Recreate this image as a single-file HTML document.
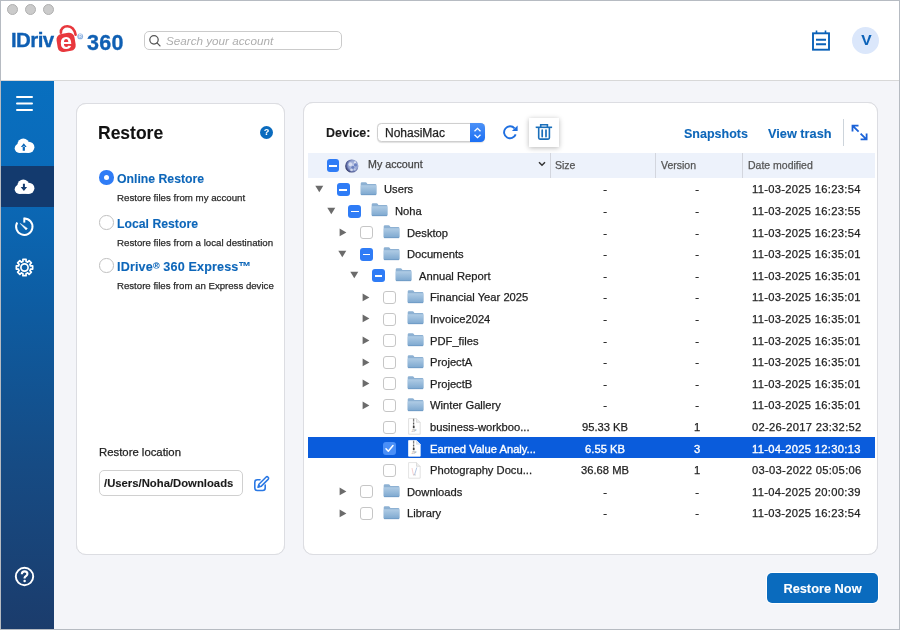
<!DOCTYPE html>
<html><head><meta charset="utf-8">
<style>
*{box-sizing:border-box;margin:0;padding:0}
html,body{width:900px;height:630px;overflow:hidden;background:#f4f5f9;-webkit-font-smoothing:antialiased;font-family:"Liberation Sans",sans-serif}
.a{position:absolute}
#frame{position:absolute;left:0;top:0;width:900px;height:630px;border:1px solid #b6bbc2}
#hdr{left:1px;top:1px;width:898px;height:80px;background:#fff;border-bottom:1px solid #d8d8d8}
.tl{width:11px;height:11px;border-radius:50%;background:#cbcbcb;border:1px solid #b0b0b0;top:2.8px}
#side{left:1px;top:81px;width:53px;height:548px;background:linear-gradient(#086fbf 0%,#0a6ab9 18%,#0d5da3 40%,#164b84 70%,#1b3c6c 100%)}
.card{background:#fff;border:1px solid #dcdde2;border-radius:10px;box-shadow:0 0 0.6px rgba(0,0,0,0.12)}
.t{white-space:nowrap;position:absolute;line-height:1;will-change:transform;-webkit-text-stroke:0.25px currentColor}
.blue{color:#0d66b9}
.t[style*="bold"]{-webkit-text-stroke:0.1px currentColor}
</style></head><body>
<!-- header -->
<div id="hdr" class="a">
  <div class="a tl" style="left:6px"></div>
  <div class="a tl" style="left:24px"></div>
  <div class="a tl" style="left:42px"></div>
</div>
<div class="t" style="left:11px;top:30px;font-size:20.5px;font-weight:bold;color:#0f5fb3;letter-spacing:-0.6px;-webkit-text-stroke:0.3px #0f5fb3">IDriv</div>
<svg class="a" style="left:54px;top:23px" width="26" height="32" viewBox="0 0 26 32">
  <path d="M6.9 9.6 C6.6 5.8 9.5 3.2 13.5 3.3 C17.8 3.5 20.6 6.6 21.6 11.8" fill="none" stroke="#e8383d" stroke-width="2.6" stroke-linecap="round"/>
  <g transform="rotate(-9 12.1 19.4)">
    <rect x="3" y="10.3" width="18.2" height="18.2" rx="5.5" fill="#e8383d"/>
  </g>
  <text x="12" y="25.9" text-anchor="middle" font-family="Liberation Sans" font-weight="bold" font-size="21.5" fill="#fff">e</text>
</svg>
<svg class="a" style="left:77px;top:33px" width="7" height="7" viewBox="0 0 7 7"><circle cx="3.2" cy="3.4" r="2.9" fill="#8fb3e0"/><text x="3.2" y="5.2" text-anchor="middle" font-size="4.8" font-weight="bold" font-family="Liberation Sans" fill="#e8f0fb">R</text></svg>
<div class="t" style="left:86.5px;top:32.5px;font-size:21.5px;font-weight:bold;color:#0f5fb3;letter-spacing:0.3px;-webkit-text-stroke:0.3px #0f5fb3">360</div>
<!-- search -->
<div class="a" style="left:144px;top:30.8px;width:198px;height:19.4px;border:1.2px solid #cbcbcb;border-radius:5px;background:#fff"></div>
<svg class="a" style="left:148px;top:34px" width="14" height="14" viewBox="0 0 14 14"><circle cx="6" cy="5.8" r="4.2" fill="none" stroke="#555" stroke-width="1.25"/><path d="M9 8.9 L12 11.9" stroke="#555" stroke-width="1.3" stroke-linecap="round"/></svg>
<div class="t" style="left:165.5px;top:35px;font-size:11.7px;font-style:italic;color:#aeaeae;-webkit-text-stroke:0">Search your account</div>
<!-- notes icon -->
<svg class="a" style="left:810px;top:29px" width="22" height="23" viewBox="0 0 22 23">
  <rect x="3" y="4.3" width="16" height="16.4" fill="none" stroke="#0b62b8" stroke-width="1.9"/>
  <path d="M6.5 1.5 V4.5 M15.5 1.5 V4.5" stroke="#0b62b8" stroke-width="1.6"/>
  <path d="M6 10.8 H16 M6 15.2 H16" stroke="#0b62b8" stroke-width="1.9"/>
</svg>
<div class="a" style="left:852px;top:27px;width:27px;height:27px;border-radius:50%;background:#dbe7fb"></div>
<div class="t" style="left:852.5px;top:31.5px;width:27px;text-align:center;font-size:15.5px;font-weight:bold;color:#0b62b8">V</div>

<!-- sidebar -->
<div id="side" class="a"></div>
<div class="a" style="left:1px;top:166px;width:53px;height:41px;background:#133a6e"></div>
<div class="a" style="left:16px;top:96px;width:17px;height:2px;background:#fff;border-radius:1px;box-shadow:0 6.5px 0 #fff,0 13px 0 #fff"></div>
<!-- cloud up -->
<svg class="a" style="left:13px;top:136px" width="23" height="19" viewBox="0 0 23 19"><circle cx="6.3" cy="12.3" r="4.6" fill="#fff"/><circle cx="10.3" cy="8.3" r="5.9" fill="#fff"/><circle cx="15.8" cy="11.3" r="5.6" fill="#fff"/><rect x="6.3" y="10" width="9.5" height="6.9" fill="#fff"/><path d="M7.9 11.1 H13.7 L10.8 7.3 Z M9.7 10.5 H11.9 V14.7 H9.7 Z" fill="#0b68b9"/></svg>
<!-- cloud down -->
<svg class="a" style="left:13px;top:177px" width="23" height="19" viewBox="0 0 23 19"><circle cx="6.3" cy="12.3" r="4.6" fill="#fff"/><circle cx="10.3" cy="8.3" r="5.9" fill="#fff"/><circle cx="15.8" cy="11.3" r="5.6" fill="#fff"/><rect x="6.3" y="10" width="9.5" height="6.9" fill="#fff"/><path d="M7.7 10.1 H14.1 L10.9 14.1 Z M9.9 6.8 H11.9 V10.5 H9.9 Z" fill="#133a6e"/></svg>
<!-- timer -->
<svg class="a" style="left:13px;top:215px" width="23" height="23" viewBox="0 0 23 23">
  <path d="M11.3 3.5 A8.2 8.2 0 1 1 4.2 7.6" fill="none" stroke="#fff" stroke-width="2"/>
  <path d="M11.3 2.6 V7.6" stroke="#fff" stroke-width="2"/>
  <path d="M7.2 8.4 L14.4 13.4 L13 14.9 Z" fill="#fff" stroke="#fff" stroke-width="0.5" stroke-linejoin="round"/>
</svg>
<!-- gear -->
<svg class="a" style="left:14px;top:257px" width="21" height="21" viewBox="-10.5 -10.5 21 21">
  <path d="M5.73 -2.37 L5.99 -1.60 L8.15 -1.58 L8.15 1.58 L5.99 1.60 L5.73 2.37 L5.37 3.10 L6.88 4.64 L4.64 6.88 L3.10 5.37 L2.37 5.73 L1.60 5.99 L1.58 8.15 L-1.58 8.15 L-1.60 5.99 L-2.37 5.73 L-3.10 5.37 L-4.64 6.88 L-6.88 4.64 L-5.37 3.10 L-5.73 2.37 L-5.99 1.60 L-8.15 1.58 L-8.15 -1.58 L-5.99 -1.60 L-5.73 -2.37 L-5.37 -3.10 L-6.88 -4.64 L-4.64 -6.88 L-3.10 -5.37 L-2.37 -5.73 L-1.60 -5.99 L-1.58 -8.15 L1.58 -8.15 L1.60 -5.99 L2.37 -5.73 L3.10 -5.37 L4.64 -6.88 L6.88 -4.64 L5.37 -3.10 Z" stroke-linejoin="round" fill="none" stroke="#fff" stroke-width="1.7"/>
  <circle cx="0" cy="0" r="3.6" fill="none" stroke="#fff" stroke-width="1.7"/>
</svg>
<!-- help -->
<svg class="a" style="left:14px;top:565.5px" width="21" height="21" viewBox="0 0 21 21">
  <circle cx="10.5" cy="10.5" r="8.7" fill="none" stroke="#fff" stroke-width="1.9"/>
  <path d="M7.8 8.3 C7.8 6.4 9.1 5.4 10.6 5.4 C12.2 5.4 13.4 6.4 13.4 8 C13.4 9.9 11 10.2 10.6 11.8 V12.5" fill="none" stroke="#fff" stroke-width="2.1"/>
  <circle cx="10.6" cy="15" r="1.25" fill="#fff"/>
</svg>

<!-- left card -->
<div class="a card" style="left:76px;top:102.5px;width:208.5px;height:452.5px"></div>
<div class="t" style="left:98.2px;top:124.5px;font-size:17.5px;font-weight:bold;color:#111">Restore</div>
<div class="a" style="left:260px;top:126px;width:13px;height:13px;border-radius:50%;background:#0a6bbe"></div>
<div class="t" style="left:260px;top:128px;width:13px;text-align:center;font-size:8.6px;font-weight:bold;color:#fff">?</div>
<!-- radios -->
<div class="a" style="left:99px;top:170px;width:14.5px;height:14.5px;border-radius:50%;background:#2f7cf6"></div>
<div class="a" style="left:103.5px;top:174.5px;width:5.5px;height:5.5px;border-radius:50%;background:#fff"></div>
<div class="t blue" style="left:116.5px;top:172.6px;font-size:12.25px;font-weight:bold">Online Restore</div>
<div class="t" style="left:116.5px;top:193px;font-size:9.7px;color:#2b2b2b">Restore files from my account</div>
<div class="a" style="left:99px;top:215px;width:14.5px;height:14.5px;border-radius:50%;background:#fff;border:1.3px solid #c0c0c0"></div>
<div class="t blue" style="left:116.5px;top:217.6px;font-size:12.25px;font-weight:bold">Local Restore</div>
<div class="t" style="left:116.5px;top:238px;font-size:9.7px;color:#2b2b2b">Restore files from a local destination</div>
<div class="a" style="left:99px;top:258px;width:14.5px;height:14.5px;border-radius:50%;background:#fff;border:1.3px solid #c0c0c0"></div>
<div class="t blue" style="left:116.5px;top:261.1px;font-size:12.6px;font-weight:bold;letter-spacing:0.15px">IDrive<span style="font-size:9px;position:relative;top:-2.5px">®</span> 360 Express™</div>
<div class="t" style="left:116.5px;top:281px;font-size:9.65px;color:#2b2b2b">Restore files from an Express device</div>
<!-- restore location -->
<div class="t" style="left:99px;top:446.5px;font-size:11.35px;color:#222">Restore location</div>
<div class="a" style="left:99px;top:470px;width:144px;height:26px;border:1px solid #d0d0d0;border-radius:5px;background:#fff"></div>
<div class="t" style="left:104px;top:478px;font-size:11.3px;font-weight:bold;color:#1a1a1a">/Users/Noha/Downloads</div>
<svg class="a" style="left:252px;top:475px" width="18" height="18" viewBox="0 0 18 18">
  <path d="M8 4.7 H5.3 Q2.8 4.7 2.8 7.2 V13 Q2.8 15.5 5.3 15.5 H10.7 Q13.2 15.5 13.2 13 V10" fill="none" stroke="#2a78e4" stroke-width="1.6" stroke-linecap="round"/>
  <path d="M6 12.3 L6.9 9.2 L13.9 2.2 Q15 1.1 16.1 2.2 Q17.2 3.3 16.1 4.4 L9.1 11.4 Z" fill="none" stroke="#2a78e4" stroke-width="1.5" stroke-linejoin="round"/>
  <path d="M5.8 12.5 L6.9 9.2 L9.1 11.4 Z" fill="#2a78e4"/>
</svg>
<!-- right card -->
<div class="a card" style="left:303px;top:102px;width:575px;height:453px"></div>
<svg width="0" height="0" style="position:absolute"><defs>
<linearGradient id="fg" x1="0" y1="0" x2="0" y2="1"><stop offset="0" stop-color="#b0cce5"/><stop offset="1" stop-color="#7ca7cf"/></linearGradient>
<g id="fold"><path d="M0.7 1.5 Q0.7 0.2 2 0.2 H5.6 Q6.4 0.2 6.8 0.9 L7.4 2.1 H15.2 Q16.4 2.1 16.4 3.3 V12 H0.7 Z" fill="#8db1d3"/><rect x="0.7" y="3.2" width="15.7" height="9.9" rx="0.9" fill="url(#fg)"/><path d="M1.2 12.7 H15.9" stroke="#6a97c2" stroke-width="0.8"/></g>
</defs></svg>
<div class="a" style="left:308px;top:153px;width:567px;height:25px;background:#edf2fb"></div>
<div class="a" style="left:550px;top:153px;width:1px;height:25px;background:#d3d6de"></div>
<div class="a" style="left:655px;top:153px;width:1px;height:25px;background:#d3d6de"></div>
<div class="a" style="left:742px;top:153px;width:1px;height:25px;background:#d3d6de"></div>
<div class="a" style="left:326.75px;top:159.25px;width:12.5px;height:12.5px;border-radius:3px;background:#2f7cf6"></div><div class="a" style="left:329.25px;top:164.75px;width:7.5px;height:1.8px;background:#fff"></div>
<svg class="a" style="left:344px;top:158.5px" width="15" height="15" viewBox="0 0 15 15"><defs><radialGradient id="gl" cx="0.6" cy="0.45" r="0.62"><stop offset="0" stop-color="#c9d2ec"/><stop offset="0.6" stop-color="#8f9fcf"/><stop offset="0.85" stop-color="#4a5590"/><stop offset="1" stop-color="#23284f"/></radialGradient></defs><circle cx="7.8" cy="7" r="6.6" fill="url(#gl)"/><ellipse cx="6.3" cy="5.2" rx="1.8" ry="2" fill="#e9eefa" opacity="0.75"/><circle cx="8.8" cy="8.2" r="1.5" fill="#4f68b0" opacity="0.7"/><circle cx="11.4" cy="6" r="1.6" fill="#4a66b4" opacity="0.65"/><circle cx="11" cy="3.2" r="0.9" fill="#fff" opacity="0.8"/><circle cx="7.5" cy="11" r="1.3" fill="#eef2fb" opacity="0.7"/><circle cx="10.8" cy="10.4" r="1" fill="#dfe6f6" opacity="0.6"/></svg>
<div class="t" style="left:368px;top:159px;font-size:10.7px;color:#444">My account</div>
<svg class="a" style="left:538px;top:161px" width="8" height="6" viewBox="0 0 8 6"><path d="M1 1.2 L4 4.2 L7 1.2" fill="none" stroke="#333" stroke-width="1.5"/></svg>
<div class="t" style="left:555px;top:159.5px;font-size:10.5px;color:#555">Size</div>
<div class="t" style="left:661px;top:159.5px;font-size:10.5px;color:#555">Version</div>
<div class="t" style="left:748px;top:159.5px;font-size:10.5px;color:#555">Date modified</div>
<svg class="a" style="left:315.0px;top:185.0px" width="9" height="8" viewBox="0 0 9 8"><path d="M0.3 0.8 H8.3 L4.3 7.2 Z" fill="#6b6b6b"/></svg>
<div class="a" style="left:336.5px;top:183.0px;width:13px;height:13px;border-radius:3px;background:#2f7cf6"></div><div class="a" style="left:339.45px;top:188.90px;width:7.5px;height:1.8px;background:#fff"></div>
<svg class="a" style="left:359.7px;top:181.8px" width="17" height="14" viewBox="0 0 17 14"><use href="#fold"/></svg>
<div class="t" style="left:383.6px;top:184.4px;font-size:11.2px;color:#1f1f1f;font-weight:normal">Users</div>
<div class="t" style="left:555px;width:100px;text-align:center;top:184.4px;font-size:11.2px;color:#1f1f1f;font-weight:normal">-</div>
<div class="t" style="left:656px;width:82px;text-align:center;top:184.4px;font-size:11.2px;color:#1f1f1f;font-weight:normal">-</div>
<div class="t" style="left:752px;top:184.4px;font-size:11.2px;letter-spacing:0.3px;color:#1f1f1f;font-weight:normal">11-03-2025 16:23:54</div>
<svg class="a" style="left:326.7px;top:206.6px" width="9" height="8" viewBox="0 0 9 8"><path d="M0.3 0.8 H8.3 L4.3 7.2 Z" fill="#6b6b6b"/></svg>
<div class="a" style="left:348.2px;top:204.6px;width:13px;height:13px;border-radius:3px;background:#2f7cf6"></div><div class="a" style="left:351.15px;top:210.50px;width:7.5px;height:1.8px;background:#fff"></div>
<svg class="a" style="left:371.4px;top:203.4px" width="17" height="14" viewBox="0 0 17 14"><use href="#fold"/></svg>
<div class="t" style="left:395.3px;top:206.0px;font-size:11.2px;color:#1f1f1f;font-weight:normal">Noha</div>
<div class="t" style="left:555px;width:100px;text-align:center;top:206.0px;font-size:11.2px;color:#1f1f1f;font-weight:normal">-</div>
<div class="t" style="left:656px;width:82px;text-align:center;top:206.0px;font-size:11.2px;color:#1f1f1f;font-weight:normal">-</div>
<div class="t" style="left:752px;top:206.0px;font-size:11.2px;letter-spacing:0.3px;color:#1f1f1f;font-weight:normal">11-03-2025 16:23:55</div>
<svg class="a" style="left:339.0px;top:227.9px" width="8" height="9" viewBox="0 0 8 9"><path d="M0.6 0.5 V8.3 L7.4 4.4 Z" fill="#6b6b6b"/></svg>
<div class="a" style="left:359.9px;top:226.2px;width:13px;height:13px;border-radius:3px;background:#fff;border:1.2px solid #c6c6c6"></div>
<svg class="a" style="left:383.1px;top:225.0px" width="17" height="14" viewBox="0 0 17 14"><use href="#fold"/></svg>
<div class="t" style="left:407.0px;top:227.6px;font-size:11.2px;color:#1f1f1f;font-weight:normal">Desktop</div>
<div class="t" style="left:555px;width:100px;text-align:center;top:227.6px;font-size:11.2px;color:#1f1f1f;font-weight:normal">-</div>
<div class="t" style="left:656px;width:82px;text-align:center;top:227.6px;font-size:11.2px;color:#1f1f1f;font-weight:normal">-</div>
<div class="t" style="left:752px;top:227.6px;font-size:11.2px;letter-spacing:0.3px;color:#1f1f1f;font-weight:normal">11-03-2025 16:23:54</div>
<svg class="a" style="left:338.4px;top:249.8px" width="9" height="8" viewBox="0 0 9 8"><path d="M0.3 0.8 H8.3 L4.3 7.2 Z" fill="#6b6b6b"/></svg>
<div class="a" style="left:359.9px;top:247.8px;width:13px;height:13px;border-radius:3px;background:#2f7cf6"></div><div class="a" style="left:362.85px;top:253.70px;width:7.5px;height:1.8px;background:#fff"></div>
<svg class="a" style="left:383.1px;top:246.6px" width="17" height="14" viewBox="0 0 17 14"><use href="#fold"/></svg>
<div class="t" style="left:407.0px;top:249.2px;font-size:11.2px;color:#1f1f1f;font-weight:normal">Documents</div>
<div class="t" style="left:555px;width:100px;text-align:center;top:249.2px;font-size:11.2px;color:#1f1f1f;font-weight:normal">-</div>
<div class="t" style="left:656px;width:82px;text-align:center;top:249.2px;font-size:11.2px;color:#1f1f1f;font-weight:normal">-</div>
<div class="t" style="left:752px;top:249.2px;font-size:11.2px;letter-spacing:0.3px;color:#1f1f1f;font-weight:normal">11-03-2025 16:35:01</div>
<svg class="a" style="left:350.1px;top:271.4px" width="9" height="8" viewBox="0 0 9 8"><path d="M0.3 0.8 H8.3 L4.3 7.2 Z" fill="#6b6b6b"/></svg>
<div class="a" style="left:371.6px;top:269.4px;width:13px;height:13px;border-radius:3px;background:#2f7cf6"></div><div class="a" style="left:374.55px;top:275.30px;width:7.5px;height:1.8px;background:#fff"></div>
<svg class="a" style="left:394.8px;top:268.2px" width="17" height="14" viewBox="0 0 17 14"><use href="#fold"/></svg>
<div class="t" style="left:418.7px;top:270.8px;font-size:11.2px;color:#1f1f1f;font-weight:normal">Annual Report</div>
<div class="t" style="left:555px;width:100px;text-align:center;top:270.8px;font-size:11.2px;color:#1f1f1f;font-weight:normal">-</div>
<div class="t" style="left:656px;width:82px;text-align:center;top:270.8px;font-size:11.2px;color:#1f1f1f;font-weight:normal">-</div>
<div class="t" style="left:752px;top:270.8px;font-size:11.2px;letter-spacing:0.3px;color:#1f1f1f;font-weight:normal">11-03-2025 16:35:01</div>
<svg class="a" style="left:362.4px;top:292.7px" width="8" height="9" viewBox="0 0 8 9"><path d="M0.6 0.5 V8.3 L7.4 4.4 Z" fill="#6b6b6b"/></svg>
<div class="a" style="left:383.3px;top:291.0px;width:13px;height:13px;border-radius:3px;background:#fff;border:1.2px solid #c6c6c6"></div>
<svg class="a" style="left:406.5px;top:289.8px" width="17" height="14" viewBox="0 0 17 14"><use href="#fold"/></svg>
<div class="t" style="left:430.4px;top:292.4px;font-size:11.2px;color:#1f1f1f;font-weight:normal">Financial Year 2025</div>
<div class="t" style="left:555px;width:100px;text-align:center;top:292.4px;font-size:11.2px;color:#1f1f1f;font-weight:normal">-</div>
<div class="t" style="left:656px;width:82px;text-align:center;top:292.4px;font-size:11.2px;color:#1f1f1f;font-weight:normal">-</div>
<div class="t" style="left:752px;top:292.4px;font-size:11.2px;letter-spacing:0.3px;color:#1f1f1f;font-weight:normal">11-03-2025 16:35:01</div>
<svg class="a" style="left:362.4px;top:314.3px" width="8" height="9" viewBox="0 0 8 9"><path d="M0.6 0.5 V8.3 L7.4 4.4 Z" fill="#6b6b6b"/></svg>
<div class="a" style="left:383.3px;top:312.6px;width:13px;height:13px;border-radius:3px;background:#fff;border:1.2px solid #c6c6c6"></div>
<svg class="a" style="left:406.5px;top:311.4px" width="17" height="14" viewBox="0 0 17 14"><use href="#fold"/></svg>
<div class="t" style="left:430.4px;top:314.0px;font-size:11.2px;color:#1f1f1f;font-weight:normal">Invoice2024</div>
<div class="t" style="left:555px;width:100px;text-align:center;top:314.0px;font-size:11.2px;color:#1f1f1f;font-weight:normal">-</div>
<div class="t" style="left:656px;width:82px;text-align:center;top:314.0px;font-size:11.2px;color:#1f1f1f;font-weight:normal">-</div>
<div class="t" style="left:752px;top:314.0px;font-size:11.2px;letter-spacing:0.3px;color:#1f1f1f;font-weight:normal">11-03-2025 16:35:01</div>
<svg class="a" style="left:362.4px;top:335.9px" width="8" height="9" viewBox="0 0 8 9"><path d="M0.6 0.5 V8.3 L7.4 4.4 Z" fill="#6b6b6b"/></svg>
<div class="a" style="left:383.3px;top:334.2px;width:13px;height:13px;border-radius:3px;background:#fff;border:1.2px solid #c6c6c6"></div>
<svg class="a" style="left:406.5px;top:333.0px" width="17" height="14" viewBox="0 0 17 14"><use href="#fold"/></svg>
<div class="t" style="left:430.4px;top:335.6px;font-size:11.2px;color:#1f1f1f;font-weight:normal">PDF_files</div>
<div class="t" style="left:555px;width:100px;text-align:center;top:335.6px;font-size:11.2px;color:#1f1f1f;font-weight:normal">-</div>
<div class="t" style="left:656px;width:82px;text-align:center;top:335.6px;font-size:11.2px;color:#1f1f1f;font-weight:normal">-</div>
<div class="t" style="left:752px;top:335.6px;font-size:11.2px;letter-spacing:0.3px;color:#1f1f1f;font-weight:normal">11-03-2025 16:35:01</div>
<svg class="a" style="left:362.4px;top:357.5px" width="8" height="9" viewBox="0 0 8 9"><path d="M0.6 0.5 V8.3 L7.4 4.4 Z" fill="#6b6b6b"/></svg>
<div class="a" style="left:383.3px;top:355.8px;width:13px;height:13px;border-radius:3px;background:#fff;border:1.2px solid #c6c6c6"></div>
<svg class="a" style="left:406.5px;top:354.6px" width="17" height="14" viewBox="0 0 17 14"><use href="#fold"/></svg>
<div class="t" style="left:430.4px;top:357.2px;font-size:11.2px;color:#1f1f1f;font-weight:normal">ProjectA</div>
<div class="t" style="left:555px;width:100px;text-align:center;top:357.2px;font-size:11.2px;color:#1f1f1f;font-weight:normal">-</div>
<div class="t" style="left:656px;width:82px;text-align:center;top:357.2px;font-size:11.2px;color:#1f1f1f;font-weight:normal">-</div>
<div class="t" style="left:752px;top:357.2px;font-size:11.2px;letter-spacing:0.3px;color:#1f1f1f;font-weight:normal">11-03-2025 16:35:01</div>
<svg class="a" style="left:362.4px;top:379.1px" width="8" height="9" viewBox="0 0 8 9"><path d="M0.6 0.5 V8.3 L7.4 4.4 Z" fill="#6b6b6b"/></svg>
<div class="a" style="left:383.3px;top:377.4px;width:13px;height:13px;border-radius:3px;background:#fff;border:1.2px solid #c6c6c6"></div>
<svg class="a" style="left:406.5px;top:376.2px" width="17" height="14" viewBox="0 0 17 14"><use href="#fold"/></svg>
<div class="t" style="left:430.4px;top:378.8px;font-size:11.2px;color:#1f1f1f;font-weight:normal">ProjectB</div>
<div class="t" style="left:555px;width:100px;text-align:center;top:378.8px;font-size:11.2px;color:#1f1f1f;font-weight:normal">-</div>
<div class="t" style="left:656px;width:82px;text-align:center;top:378.8px;font-size:11.2px;color:#1f1f1f;font-weight:normal">-</div>
<div class="t" style="left:752px;top:378.8px;font-size:11.2px;letter-spacing:0.3px;color:#1f1f1f;font-weight:normal">11-03-2025 16:35:01</div>
<svg class="a" style="left:362.4px;top:400.7px" width="8" height="9" viewBox="0 0 8 9"><path d="M0.6 0.5 V8.3 L7.4 4.4 Z" fill="#6b6b6b"/></svg>
<div class="a" style="left:383.3px;top:399.0px;width:13px;height:13px;border-radius:3px;background:#fff;border:1.2px solid #c6c6c6"></div>
<svg class="a" style="left:406.5px;top:397.8px" width="17" height="14" viewBox="0 0 17 14"><use href="#fold"/></svg>
<div class="t" style="left:430.4px;top:400.4px;font-size:11.2px;color:#1f1f1f;font-weight:normal">Winter Gallery</div>
<div class="t" style="left:555px;width:100px;text-align:center;top:400.4px;font-size:11.2px;color:#1f1f1f;font-weight:normal">-</div>
<div class="t" style="left:656px;width:82px;text-align:center;top:400.4px;font-size:11.2px;color:#1f1f1f;font-weight:normal">-</div>
<div class="t" style="left:752px;top:400.4px;font-size:11.2px;letter-spacing:0.3px;color:#1f1f1f;font-weight:normal">11-03-2025 16:35:01</div>
<div class="a" style="left:383.3px;top:420.6px;width:13px;height:13px;border-radius:3px;background:#fff;border:1.2px solid #c6c6c6"></div>
<svg class="a" style="left:407.8px;top:418.3px" width="13" height="17" viewBox="0 0 13 17"><path d="M0.6 0.6 H8.5 L12.2 4.3 V16.2 H0.6 Z" fill="#fff" stroke="#d8d8d8" stroke-width="0.8"/><path d="M8.5 0.6 V4.3 H12.2" fill="#eee" stroke="#ccc" stroke-width="0.6"/><path d="M5.6 0.8 V10" stroke="#5a5a5a" stroke-width="1.3" stroke-dasharray="0.9 0.5"/><rect x="4.9" y="7.8" width="1.6" height="2.4" fill="#3d3d3d"/><text x="6" y="14.4" text-anchor="middle" font-size="3" font-style="italic" font-family="Liberation Sans" fill="#8a8a8a">ZIP</text></svg>
<div class="t" style="left:430.4px;top:422.0px;font-size:11.2px;color:#1f1f1f;font-weight:normal">business-workboo...</div>
<div class="t" style="left:555px;width:100px;text-align:center;top:422.0px;font-size:11.2px;color:#1f1f1f;font-weight:normal">95.33 KB</div>
<div class="t" style="left:656px;width:82px;text-align:center;top:422.0px;font-size:11.2px;color:#1f1f1f;font-weight:normal">1</div>
<div class="t" style="left:752px;top:422.0px;font-size:11.2px;letter-spacing:0.3px;color:#1f1f1f;font-weight:normal">02-26-2017 23:32:52</div>
<div class="a" style="left:308px;top:437px;width:567px;height:21px;background:#0a5cdc"></div>
<div class="a" style="left:383.3px;top:442.2px;width:13px;height:13px;border-radius:3px;background:#4a8ff7"></div><svg class="a" style="left:383.3px;top:442.2px" width="13" height="13" viewBox="0 0 13 13"><path d="M3 6.8 L5.3 9.2 L10 3.6" fill="none" stroke="#fff" stroke-width="1.5" stroke-linecap="round" stroke-linejoin="round"/></svg>
<svg class="a" style="left:407.8px;top:439.9px" width="13" height="17" viewBox="0 0 13 17"><path d="M0.6 0.6 H8.5 L12.2 4.3 V16.2 H0.6 Z" fill="#fff" stroke="#fff" stroke-width="0.8"/><path d="M8.5 0.6 V4.3 H12.2" fill="#dfe6f0" stroke="#cfd8e4" stroke-width="0.6"/><path d="M5.6 0.8 V10" stroke="#5a5a5a" stroke-width="1.3" stroke-dasharray="0.9 0.5"/><rect x="4.9" y="7.8" width="1.6" height="2.4" fill="#3d3d3d"/><text x="6" y="14.4" text-anchor="middle" font-size="3" font-style="italic" font-family="Liberation Sans" fill="#8a8a8a">ZIP</text></svg>
<div class="t" style="left:430.4px;top:443.6px;font-size:11.2px;color:#fff;font-weight:normal;-webkit-text-stroke:0.35px #fff">Earned Value Analy...</div>
<div class="t" style="left:555px;width:100px;text-align:center;top:443.6px;font-size:11.2px;color:#fff;font-weight:normal;-webkit-text-stroke:0.35px #fff">6.55 KB</div>
<div class="t" style="left:656px;width:82px;text-align:center;top:443.6px;font-size:11.2px;color:#fff;font-weight:normal;-webkit-text-stroke:0.35px #fff">3</div>
<div class="t" style="left:752px;top:443.6px;font-size:11.2px;letter-spacing:0.3px;color:#fff;font-weight:normal;-webkit-text-stroke:0.35px #fff">11-04-2025 12:30:13</div>
<div class="a" style="left:383.3px;top:463.8px;width:13px;height:13px;border-radius:3px;background:#fff;border:1.2px solid #c6c6c6"></div>
<svg class="a" style="left:407.8px;top:461.5px" width="13" height="17" viewBox="0 0 13 17"><path d="M0.6 0.6 H8.5 L12.2 4.3 V16.2 H0.6 Z" fill="#fff" stroke="#dcdcdc" stroke-width="0.8"/><path d="M8.5 0.6 V4.3 H12.2" fill="#eee" stroke="#ccc" stroke-width="0.6"/><path d="M4 6 C4.5 9 5 11 5.5 13" stroke="#eaa" stroke-width="0.8" fill="none" opacity="0.7"/><path d="M8.8 5.5 L6.5 13" stroke="#8aa8d6" stroke-width="0.8" opacity="0.8"/><path d="M5 13 H8" stroke="#bbb" stroke-width="0.6"/></svg>
<div class="t" style="left:430.4px;top:465.2px;font-size:11.2px;color:#1f1f1f;font-weight:normal">Photography Docu...</div>
<div class="t" style="left:555px;width:100px;text-align:center;top:465.2px;font-size:11.2px;color:#1f1f1f;font-weight:normal">36.68 MB</div>
<div class="t" style="left:656px;width:82px;text-align:center;top:465.2px;font-size:11.2px;color:#1f1f1f;font-weight:normal">1</div>
<div class="t" style="left:752px;top:465.2px;font-size:11.2px;letter-spacing:0.3px;color:#1f1f1f;font-weight:normal">03-03-2022 05:05:06</div>
<svg class="a" style="left:339.0px;top:487.1px" width="8" height="9" viewBox="0 0 8 9"><path d="M0.6 0.5 V8.3 L7.4 4.4 Z" fill="#6b6b6b"/></svg>
<div class="a" style="left:359.9px;top:485.4px;width:13px;height:13px;border-radius:3px;background:#fff;border:1.2px solid #c6c6c6"></div>
<svg class="a" style="left:383.1px;top:484.2px" width="17" height="14" viewBox="0 0 17 14"><use href="#fold"/></svg>
<div class="t" style="left:407.0px;top:486.8px;font-size:11.2px;color:#1f1f1f;font-weight:normal">Downloads</div>
<div class="t" style="left:555px;width:100px;text-align:center;top:486.8px;font-size:11.2px;color:#1f1f1f;font-weight:normal">-</div>
<div class="t" style="left:656px;width:82px;text-align:center;top:486.8px;font-size:11.2px;color:#1f1f1f;font-weight:normal">-</div>
<div class="t" style="left:752px;top:486.8px;font-size:11.2px;letter-spacing:0.3px;color:#1f1f1f;font-weight:normal">11-04-2025 20:00:39</div>
<svg class="a" style="left:339.0px;top:508.7px" width="8" height="9" viewBox="0 0 8 9"><path d="M0.6 0.5 V8.3 L7.4 4.4 Z" fill="#6b6b6b"/></svg>
<div class="a" style="left:359.9px;top:507.0px;width:13px;height:13px;border-radius:3px;background:#fff;border:1.2px solid #c6c6c6"></div>
<svg class="a" style="left:383.1px;top:505.8px" width="17" height="14" viewBox="0 0 17 14"><use href="#fold"/></svg>
<div class="t" style="left:407.0px;top:508.4px;font-size:11.2px;color:#1f1f1f;font-weight:normal">Library</div>
<div class="t" style="left:555px;width:100px;text-align:center;top:508.4px;font-size:11.2px;color:#1f1f1f;font-weight:normal">-</div>
<div class="t" style="left:656px;width:82px;text-align:center;top:508.4px;font-size:11.2px;color:#1f1f1f;font-weight:normal">-</div>
<div class="t" style="left:752px;top:508.4px;font-size:11.2px;letter-spacing:0.3px;color:#1f1f1f;font-weight:normal">11-03-2025 16:23:54</div>
<div class="t" style="left:326px;top:127px;font-size:12.5px;font-weight:bold;color:#1a1a1a">Device:</div>
<div class="a" style="left:377px;top:123px;width:108px;height:19px;border-radius:4.5px;background:#fff;border:1px solid #cfcfcf;box-shadow:0 0.5px 1px rgba(0,0,0,0.12)"></div>
<div class="a" style="left:470px;top:123px;width:15px;height:19px;border-radius:0 4.5px 4.5px 0;background:linear-gradient(#4c91f7,#1b6ff4)"></div>
<svg class="a" style="left:472px;top:126px" width="11" height="14" viewBox="0 0 11 14"><path d="M2.5 5.2 L5.5 2.3 L8.5 5.2 M2.5 8.8 L5.5 11.7 L8.5 8.8" fill="none" stroke="#fff" stroke-width="1.3"/></svg>
<div class="t" style="left:385px;top:127px;font-size:12px;color:#1f1f1f">NohasiMac</div>
<svg class="a" style="left:501px;top:123px" width="18" height="18" viewBox="0 0 18 18"><path d="M14.7 11.4 A6 6 0 1 1 13.6 5.34" fill="none" stroke="#1f6fe0" stroke-width="1.9"/><path d="M16.6 2.4 V8.1 H10.9 Z" fill="#1f6fe0"/></svg>
<div class="a" style="left:529px;top:118px;width:30px;height:29px;background:#fff;box-shadow:0 1px 5px rgba(0,0,0,0.28)"></div>
<svg class="a" style="left:534px;top:122px" width="20" height="20" viewBox="0 0 20 20"><path d="M1.7 5.3 H18.1" stroke="#1a6fba" stroke-width="1.6"/><path d="M6.7 5 V2.7 H13.4 V5" fill="none" stroke="#1a6fba" stroke-width="1.6"/><path d="M4.7 5.6 V15.8 Q4.7 17.1 6 17.1 H14.1 Q15.4 17.1 15.4 15.8 V5.6" fill="none" stroke="#1a6fba" stroke-width="1.6"/><path d="M8.2 8.2 V14.6 M12 8.2 V14.6" stroke="#1a6fba" stroke-width="1.7" stroke-linecap="round"/></svg>
<div class="t blue" style="left:684px;top:127.5px;font-size:12.5px;font-weight:bold">Snapshots</div>
<div class="t blue" style="left:768px;top:127.5px;font-size:12.75px;font-weight:bold">View trash</div>
<div class="a" style="left:843px;top:119px;width:1px;height:27px;background:#cdd4db"></div>
<svg class="a" style="left:851px;top:123.5px" width="17" height="17" viewBox="0 0 17 17"><path d="M1.5 7.6 V1.6 H7.5 M1.8 1.8 L7.6 7.6 M9.6 9.6 L15.4 15.4 M9.6 15.4 H15.6 V9.4" fill="none" stroke="#1a62d8" stroke-width="1.8"/></svg>

<!-- restore button -->
<div class="a" style="left:766px;top:572px;width:113px;height:32px;border-radius:6px;background:#fff"></div>
<div class="a" style="left:767px;top:573px;width:111px;height:30px;border-radius:5px;background:#0a6bbe"></div>
<div class="t" style="left:767px;top:583px;width:111px;text-align:center;font-size:12.8px;font-weight:bold;color:#fff">Restore Now</div>

<div id="frame"></div>
</body></html>
